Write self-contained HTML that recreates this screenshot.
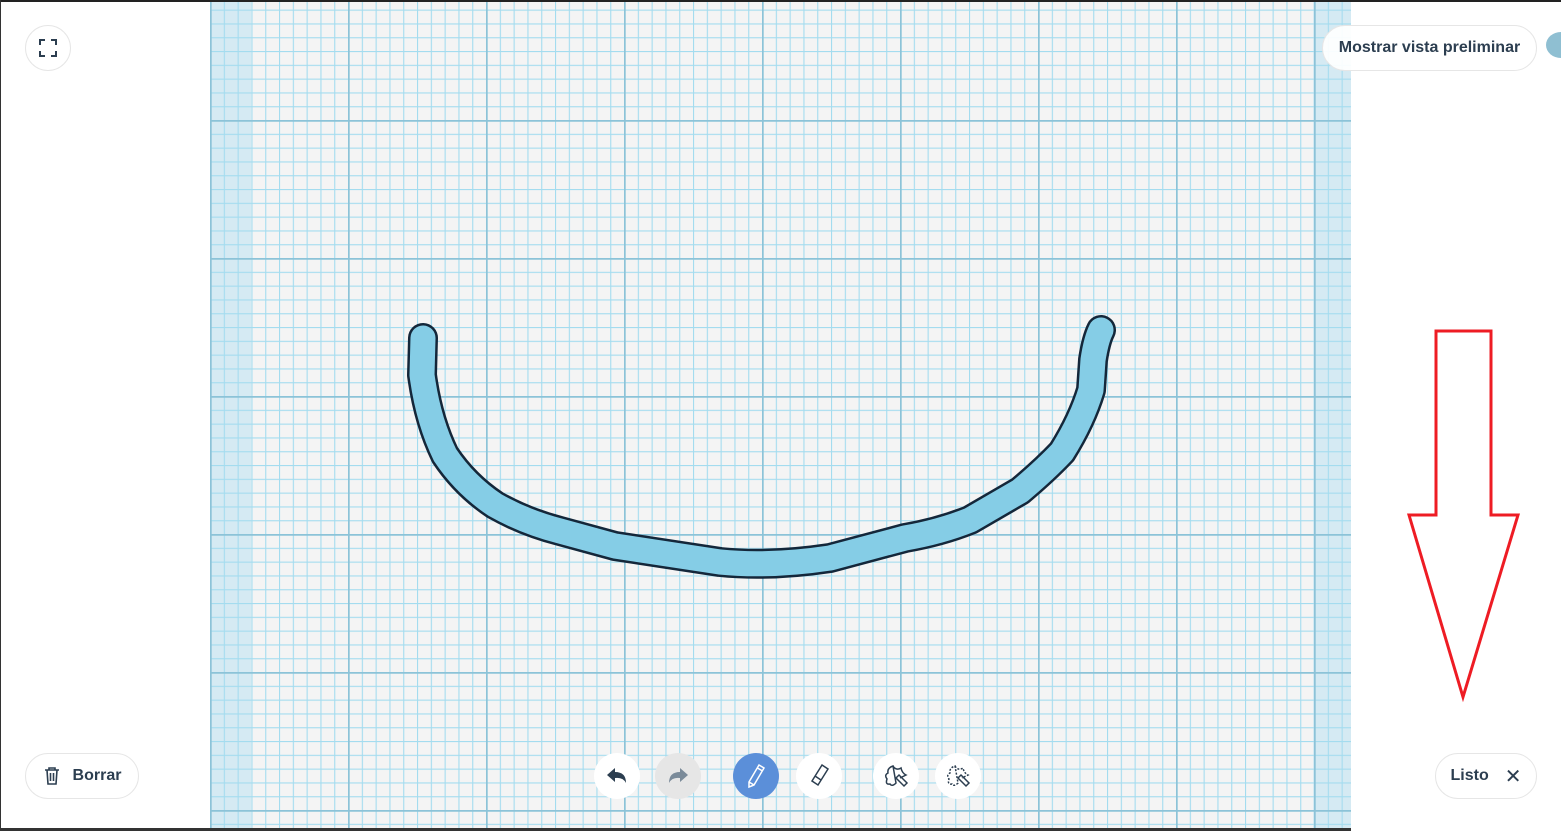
<!DOCTYPE html>
<html><head><meta charset="utf-8"><style>
*{margin:0;padding:0;box-sizing:border-box}
body{width:1561px;height:831px;background:#fff;position:relative;overflow:hidden;font-family:"Liberation Sans",sans-serif}
.grid{position:absolute;left:210px;top:0;width:1141px;height:831px;background-color:#f4f4f4}
.btn{position:absolute;background:#fff;border:1px solid #e6e6e6;border-radius:24px;display:flex;align-items:center;justify-content:center;color:#2c3e50;font-size:16px;font-weight:bold}
.circ{position:absolute;width:46px;height:46px;border-radius:50%;background:#fff;display:flex;align-items:center;justify-content:center}
</style></head><body>
<svg class="grid" width="1141" height="831" viewBox="0 0 1141 831">
<defs>
<pattern id="mn" x="0" y="9.6" width="13.8" height="13.8" patternUnits="userSpaceOnUse">
<path d="M0.5 0V13.8M0 0.5H13.8" stroke="#a4dcef" stroke-width="1.2" fill="none"/>
</pattern>
<pattern id="mj" x="0" y="120" width="138" height="138" patternUnits="userSpaceOnUse">
<path d="M0.8 0V138M0 0.8H138" stroke="#8cc3d8" stroke-width="1.8" fill="none"/>
</pattern>
</defs>
<rect width="1141" height="831" fill="#f4f4f4"/>
<rect x="0" width="41" height="831" fill="#d5eaf3"/>
<rect x="1103" width="38" height="831" fill="#d5eaf3"/>
<rect width="1141" height="831" fill="url(#mn)"/>
<rect width="1141" height="831" fill="url(#mj)"/>
</svg>
<div style="position:absolute;left:0;top:0;width:1561px;height:2px;background:#222"></div>
<div style="position:absolute;left:0;top:828px;width:1351px;height:3px;background:#333"></div>
<div style="position:absolute;left:0;top:0;width:1px;height:831px;background:#333"></div>
<svg style="position:absolute;left:0;top:0" width="1561" height="831">
<path d="M423 338 L422 375 Q428 420 445 455 Q465 485 495 505 Q525 522 560 531 L615 546 L720 562 Q770 567 830 558 L905 538 Q940 532 970 520 L1020 491 Q1045 470 1062 452 Q1082 420 1091 390 L1093 360 Q1096 340 1101 330" fill="none" stroke="#14273a" stroke-width="30" stroke-linecap="round" stroke-linejoin="round"/>
<path d="M423 338 L422 375 Q428 420 445 455 Q465 485 495 505 Q525 522 560 531 L615 546 L720 562 Q770 567 830 558 L905 538 Q940 532 970 520 L1020 491 Q1045 470 1062 452 Q1082 420 1091 390 L1093 360 Q1096 340 1101 330" fill="none" stroke="#85cde6" stroke-width="25" stroke-linecap="round" stroke-linejoin="round"/>
<path d="M1436 331 H1491 V515 H1518 L1463 697 L1409 515 H1436 Z" fill="none" stroke="#ee1c24" stroke-width="3"/>
</svg>
<div class="circ" style="left:25px;top:25px;border:1px solid #e6e6e6">
<svg width="18" height="18" viewBox="0 0 18 18" fill="none" stroke="#2c3e50" stroke-width="2"><path d="M1 6V1H6M12 1H17V6M17 12V17H12M6 17H1V12"/></svg></div>
<div class="btn" style="left:1322px;top:25px;width:215px;height:46px;background:rgba(255,255,255,.92)">Mostrar vista preliminar</div>
<div style="position:absolute;left:1546px;top:32px;width:30px;height:26px;border-radius:50%;background:#8fbfd2"></div>
<div class="btn" style="left:25px;top:753px;width:114px;height:46px">
<svg width="18" height="20" viewBox="0 0 18 20" fill="none" stroke="#2c3e50" stroke-width="1.6" style="margin-right:12px"><path d="M2 4H16M6 4V2H12V4M4 4L5 18H13L14 4M7.5 7V15M10.5 7V15"/></svg>Borrar</div>
<div class="btn" style="left:1435px;top:753px;width:102px;height:46px">Listo<span style="margin-left:16px;font-weight:normal;font-size:20px">✕</span></div>
<div class="circ" style="left:594px;top:753px;background:#fff">
<svg width="24" height="20" viewBox="0 0 24 20"><path d="M2 9L10 2V6Q21 6 21 17Q18 11 10 12V16Z" fill="#2c3e50"/></svg></div>
<div class="circ" style="left:655px;top:753px;background:#e6e6e6">
<svg width="24" height="20" viewBox="0 0 24 20"><path d="M22 9L14 2V6Q3 6 3 17Q6 11 14 12V16Z" fill="#7a8a99"/></svg></div>
<div class="circ" style="left:733px;top:753px;background:#5b8fd9">
<svg width="22" height="26" viewBox="0 0 22 26" fill="none" stroke="#fff" stroke-width="1.5"><path d="M14 2L19 5L9 22L4 24L4 19Z M12.5 5L17.5 8M4 19L9 22"/></svg></div>
<div class="circ" style="left:796px;top:753px">
<svg width="24" height="26" viewBox="0 0 24 26" fill="none" stroke="#2c3e50" stroke-width="1.5"><path d="M15 2L21 6L11 22L5 18Z M8 13L14 17"/></svg></div>
<div class="circ" style="left:873px;top:753px">
<svg width="28" height="26" viewBox="0 0 28 26" fill="none" stroke="#2c3e50" stroke-width="1.5"><path d="M11 3Q14 8 19 5Q20 10 24 12L18 15M14 20Q10 24 8 21Q3 22 5 16Q2 12 6 10Q5 5 11 3Z M17 12L25 20L22 23L14 15Z"/></svg></div>
<div class="circ" style="left:935px;top:753px">
<svg width="28" height="26" viewBox="0 0 28 26" fill="none" stroke="#2c3e50" stroke-width="1.5" stroke-dasharray="2 1.5"><path d="M11 3Q14 8 19 5Q20 10 24 12L18 15M14 20Q10 24 8 21Q3 22 5 16Q2 12 6 10Q5 5 11 3Z"/><path d="M17 12L25 20L22 23L14 15Z" stroke-dasharray="none"/></svg></div>
</body></html>
